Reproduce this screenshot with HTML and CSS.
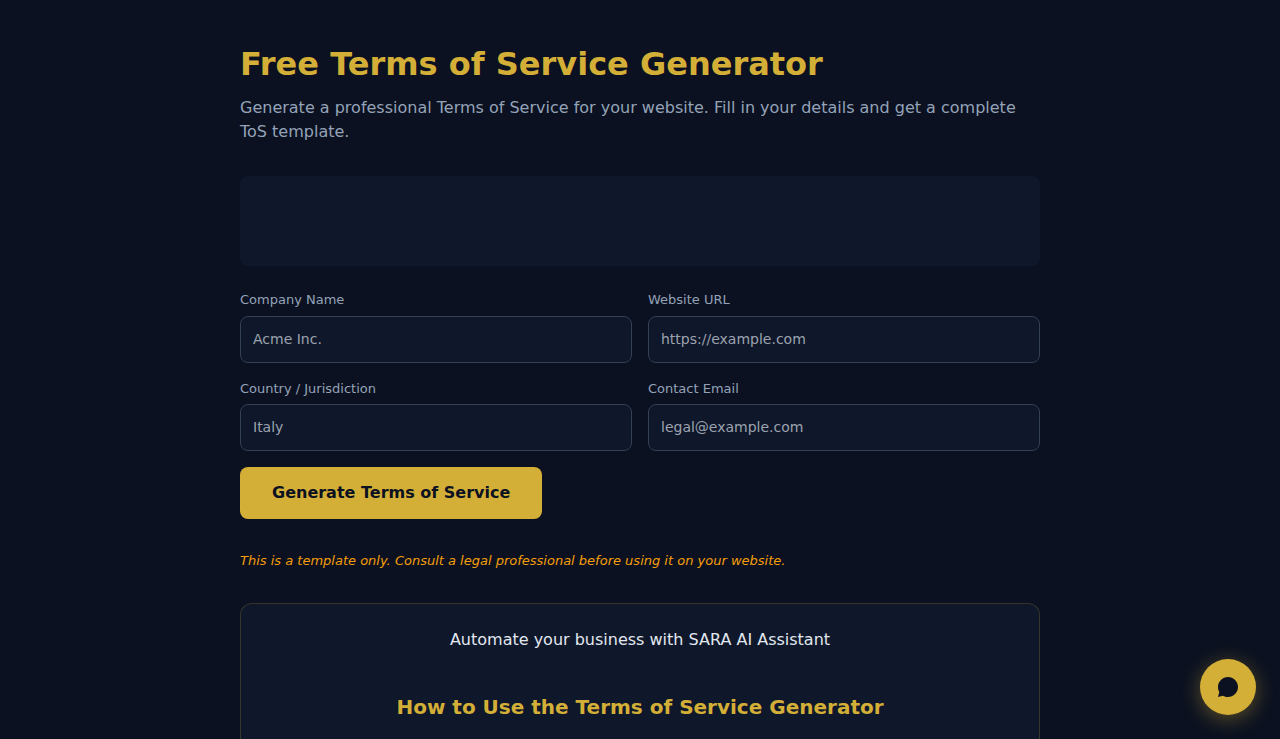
FILE: index.html
```html
<!DOCTYPE html>
<html lang="en">
<head>
<meta charset="utf-8">
<meta name="viewport" content="width=device-width, initial-scale=1">
<title>Free Terms of Service Generator</title>
<link rel="stylesheet" href="styles.css">
</head>
<body>
<main class="page">
  <h1 class="title">Free Terms of Service Generator</h1>
  <p class="intro">Generate a professional Terms of Service for your website. Fill in your details and get a complete ToS template.</p>
  <div class="banner"></div>
  <form class="form">
    <div class="fields">
      <div class="field">
        <label class="label" for="company">Company Name</label>
        <input class="input" id="company" type="text" placeholder="Acme Inc.">
      </div>
      <div class="field">
        <label class="label" for="website">Website URL</label>
        <input class="input" id="website" type="url" placeholder="https://example.com">
      </div>
      <div class="field">
        <label class="label" for="country">Country / Jurisdiction</label>
        <input class="input" id="country" type="text" placeholder="Italy">
      </div>
      <div class="field">
        <label class="label" for="email">Contact Email</label>
        <input class="input" id="email" type="email" placeholder="legal@example.com">
      </div>
    </div>
    <button class="submit" type="button">Generate Terms of Service</button>
  </form>
  <p class="disclaimer">This is a template only. Consult a legal professional before using it on your website.</p>
  <section class="card">
    <p class="card-text">Automate your business with SARA AI Assistant</p>
    <h2 class="card-title">How to Use the Terms of Service Generator</h2>
  </section>
</main>
<button class="chat" type="button" aria-label="Open chat">
  <svg class="chat-icon" viewBox="0 0 24 24" aria-hidden="true"><path d="M12 2C6.48 2 2 6.48 2 12c0 1.9.5 3.6 1.3 5.1L2 22l4.9-1.3C8.4 21.500 10.100 22 12 22c5.520 0 10-4.480 10-10S17.520 2 12 2z"/></svg>
</button>
</body>
</html>
```
FILE: styles.css
```css
* {
  box-sizing: border-box;
  margin: 0;
  padding: 0;
}

body {
  background: #0b1120;
  color: #e2e8f0;
  font-family: "DejaVu Sans", sans-serif;
  font-size: 16px;
  line-height: 1.5;
}

.page {
  max-width: 848px;
  margin: 0 auto;
  padding: 40px 24px;
}

.title {
  margin-bottom: 8px;
  color: #d4af37;
  font-size: 32px;
}

.intro {
  margin-bottom: 32px;
  color: #94a3b8;
}

.banner {
  min-height: 90px;
  margin-bottom: 24px;
  border-radius: 8px;
  background: #0f172a;
}

.fields {
  display: grid;
  grid-template-columns: 1fr 1fr;
  gap: 16px;
  margin-bottom: 16px;
}

.label {
  display: block;
  margin-bottom: 6px;
  color: #94a3b8;
  font-size: 13px;
}

.input {
  display: block;
  width: 100%;
  padding: 12px;
  border: 1px solid #334155;
  border-radius: 8px;
  background: #0f172a;
  color: #e2e8f0;
  font: inherit;
  font-size: 14px;
}

.input::placeholder {
  color: #9ca3af;
}

.submit {
  display: block;
  padding: 14px 32px;
  border: 0;
  border-radius: 8px;
  background: #d4af37;
  color: #0b1120;
  font: inherit;
  font-weight: 700;
  cursor: pointer;
}

.disclaimer {
  margin: 32px 0;
  color: #f59e0b;
  font-size: 13px;
  font-style: italic;
}

.card {
  padding: 24px;
  border: 1px solid rgba(212, 175, 55, 0.2);
  border-radius: 12px;
  background: #0f172a;
  text-align: center;
}

.card-text {
  margin-bottom: 40px;
}

.card-title {
  margin-bottom: 16px;
  color: #d4af37;
  font-size: 20px;
}

.chat {
  position: fixed;
  right: 24px;
  bottom: 24px;
  display: flex;
  align-items: center;
  justify-content: center;
  width: 56px;
  height: 56px;
  border: 0;
  border-radius: 50%;
  background: #d4af37;
  box-shadow: 0 4px 20px rgba(212, 175, 55, 0.4);
  cursor: pointer;
}

.chat-icon {
  width: 24px;
  height: 24px;
  fill: #0b1120;
}
```
